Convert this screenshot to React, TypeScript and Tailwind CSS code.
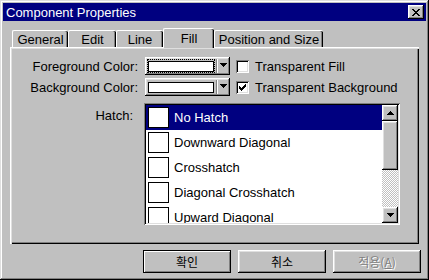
import React from "react";

const raised =
  "shadow-[inset_-1px_-1px_#000,inset_1px_1px_#fff,inset_-2px_-2px_#808080,inset_2px_2px_#dfdfdf]";
const sunken =
  "shadow-[inset_1px_1px_#808080,inset_-1px_-1px_#fff,inset_2px_2px_#000,inset_-2px_-2px_#dfdfdf]";

// pixel pattern helper for tiny glyphs (close X, check mark)
function Pixels({ rows, color = "#000" }: { rows: string[]; color?: string }) {
  const w = rows[0].length;
  const h = rows.length;
  return (
    <svg width={w} height={h} viewBox={`0 0 ${w} ${h}`} shapeRendering="crispEdges">
      {rows.flatMap((r, y) =>
        r.split("").map((c, x) => (c === "#" ? <rect key={`${x}-${y}`} x={x} y={y} width={1} height={1} fill={color} /> : null))
      )}
    </svg>
  );
}

const CLOSE_X = ["##....##", ".##..##.", "..####..", "...##...", "..####..", ".##..##.", "##....##"];
const CHECK = ["......#", ".....##", "#...###", "##.###.", "#####..", ".###...", "..#...."];
const DOWN = ["#######", ".#####.", "..###..", "...#..."];
const UP = ["...#...", "..###..", ".#####.", "#######"];

function Tab({ label, w, active }: { label: string; w: string; active?: boolean }) {
  if (active) {
    return (
      <div
        className={`relative z-10 -mb-px flex h-[20px] ${w} items-center justify-center rounded-tl-[2px] rounded-tr-[2px] border-l border-t border-white bg-[#c0c0c0] pb-[1px] shadow-[inset_-1px_0_#000,inset_-2px_0_#808080]`}
      >
        {label}
      </div>
    );
  }
  return (
    <div
      className={`flex h-[17px] ${w} items-center justify-center rounded-tl-[2px] rounded-tr-[2px] border-l border-t border-white bg-[#c0c0c0] shadow-[inset_-1px_0_#000,inset_-2px_0_#808080]`}
    >
      {label}
    </div>
  );
}

function ColorCombo({ focus }: { focus?: boolean }) {
  return (
    <div className={`flex h-[18px] w-[85px] bg-[#c0c0c0] p-[2px] ${raised}`}>
      <div
        className={`flex flex-1 items-center justify-center border ${focus ? "border-dotted border-black" : "border-transparent"}`}
      >
        <div className="h-[11px] w-full border border-black bg-white" />
      </div>
      <div className="mx-[1px] w-[2px] shadow-[inset_1px_0_#808080,inset_-1px_0_#fff]" />
      <div className="flex w-[9px] items-center justify-center pb-[2px]">
        <Pixels rows={DOWN} />
      </div>
    </div>
  );
}

function CheckBox({ checked, label }: { checked?: boolean; label: string }) {
  return (
    <div className="ml-[6px] flex items-center">
      <div className={`flex h-[13px] w-[13px] items-center justify-center bg-white ${sunken}`}>
        {checked && <Pixels rows={CHECK} />}
      </div>
      <span className="ml-[6px]">{label}</span>
    </div>
  );
}

const HATCHES = ["No Hatch", "Downward Diagonal", "Crosshatch", "Diagonal Crosshatch", "Upward Diagonal"];

export default function App() {
  return (
    <div
      className={`flex h-[280px] w-[429px] flex-col bg-[#c0c0c0] p-[3px] font-['Liberation_Sans','Noto_Sans_CJK_KR',sans-serif] text-[13px] leading-none text-black shadow-[inset_-1px_-1px_#000,inset_1px_1px_#dfdfdf,inset_-2px_-2px_#808080,inset_2px_2px_#fff]`}
    >
      {/* title bar */}
      <div className="flex h-[18px] items-center justify-between bg-[#000080] pl-[3px] pr-[2px]">
        <span className="text-white">Component Properties</span>
        <div className={`flex h-[14px] w-[16px] items-center justify-center bg-[#c0c0c0] ${raised}`}>
          <Pixels rows={CLOSE_X} />
        </div>
      </div>

      {/* tabs */}
      <div className="ml-[7px] mt-[7px] flex items-end pl-[2px]">
        <Tab label="General" w="w-[56px]" />
        <Tab label="Edit" w="w-[48px]" />
        <Tab label="Line" w="w-[47px]" />
        <Tab label="Fill" w="w-[51px]" active />
        <Tab label="Position and Size" w="w-[109px]" />
      </div>

      {/* page */}
      <div
        className={`ml-[7px] flex h-[197px] w-[409px] flex-col pt-[10px] shadow-[inset_1px_1px_#fff,inset_2px_2px_#dfdfdf,inset_-1px_-1px_#000,inset_-2px_-2px_#808080]`}
      >
        <div className="flex h-[18px] items-center">
          <span className="w-[128px] text-right">Foreground Color:</span>
          <div className="ml-[7px]">
            <ColorCombo focus />
          </div>
          <CheckBox label="Transparent Fill" />
        </div>
        <div className="mt-[3px] flex h-[18px] items-center">
          <span className="w-[128px] text-right">Background Color:</span>
          <div className="ml-[7px]">
            <ColorCombo />
          </div>
          <CheckBox checked label="Transparent Background" />
        </div>

        <div className="mt-[7px] flex items-start">
          <span className="w-[128px] pr-[5px] pt-[6px] text-right">Hatch:</span>
          <div className={`ml-[6px] flex h-[122px] w-[256px] bg-white p-[2px] ${sunken}`}>
            <div className="flex flex-1 flex-col overflow-hidden">
              {HATCHES.map((h, i) => (
                <div
                  key={h}
                  className={`flex h-[25px] shrink-0 items-start pl-[2px] pt-[2px] ${i === 0 ? "bg-[#000080] text-white" : ""}`}
                >
                  <div className="h-[21px] w-[21px] border border-black bg-white" />
                  <span className="ml-[5px] mt-[4px]">{h}</span>
                </div>
              ))}
            </div>
            <div className="flex w-[16px] flex-col">
              <div className={`flex h-[16px] items-center justify-center bg-[#c0c0c0] ${raised}`}>
                <Pixels rows={UP} />
              </div>
              <div className={`h-[49px] bg-[#c0c0c0] ${raised}`} />
              <div className="flex-1 bg-[repeating-conic-gradient(#c0c0c0_0%_25%,#ffffff_0%_50%)] bg-size-[2px_2px]" />
              <div className={`flex h-[16px] items-center justify-center bg-[#c0c0c0] ${raised}`}>
                <Pixels rows={DOWN} />
              </div>
            </div>
          </div>
        </div>
      </div>

      {/* buttons */}
      <div className="mt-[6px] flex justify-end gap-[7px] pr-[5px] font-['Noto_Sans_CJK_KR',sans-serif] text-[12px]">
        <button
          type="button"
          className="flex h-[23px] w-[88px] items-center justify-center border border-black bg-[#c0c0c0] shadow-[inset_1px_1px_#fff,inset_-1px_-1px_#808080]"
        >
          확인
        </button>
        <button
          type="button"
          className={`flex h-[23px] w-[88px] items-center justify-center bg-[#c0c0c0] ${raised}`}
        >
          취소
        </button>
        <button
          type="button"
          className={`flex h-[23px] w-[88px] items-center justify-center bg-[#c0c0c0] text-[#808080] [text-shadow:1px_1px_0_#fff] ${raised}`}
        >
          적용(<span className="underline">A</span>)
        </button>
      </div>
    </div>
  );
}
